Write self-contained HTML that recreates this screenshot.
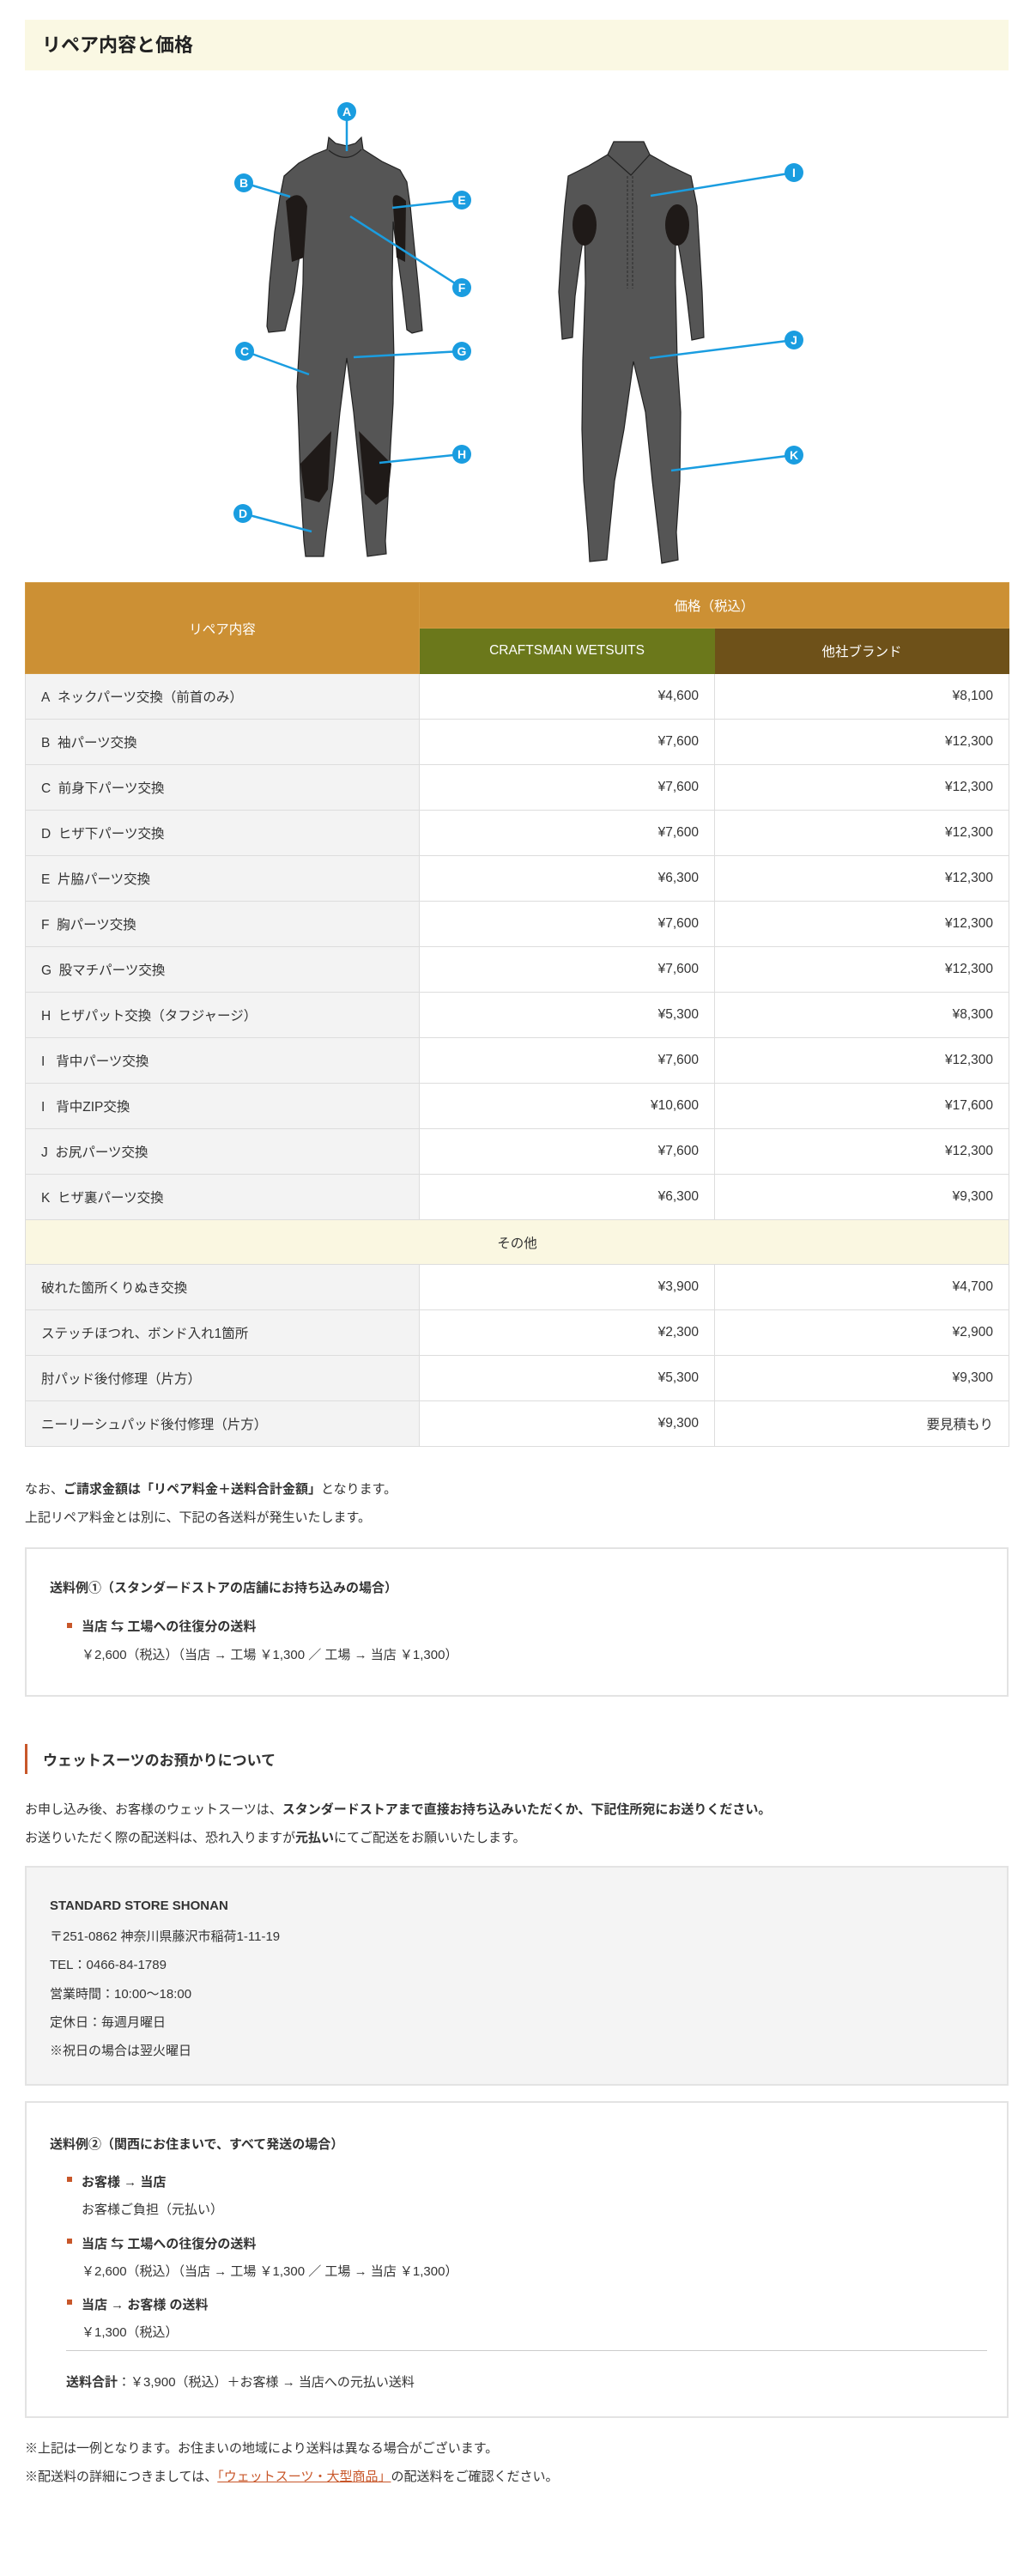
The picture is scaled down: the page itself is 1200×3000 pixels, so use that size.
<!DOCTYPE html>
<html><head><meta charset="utf-8"><style>
*{margin:0;padding:0;box-sizing:border-box}
body{width:1200px;height:3000px;background:#fff;position:relative;font-family:"Liberation Sans","Noto Sans CJK JP",sans-serif;color:#333;font-size:15px}
.abs{position:absolute}
.hd{left:29px;top:23px;width:1146px;height:59px;background:#faf8e3;font-size:22px;font-weight:bold;color:#222;padding-left:20px;line-height:59px}
table{border-collapse:collapse;position:absolute;left:29px;top:678px;width:1146px;table-layout:fixed;font-size:15.5px}
td,th{border:1px solid #ddd;height:53px;padding:0 18px;font-weight:normal}
th{color:#fff;border-color:#d29a40}
td.l{background:#f3f3f3}
td.r{text-align:right}
.p{left:29px;font-size:15px;line-height:33px}
.box{left:29px;width:1146px;border:2px solid #e3e3e3;padding:0 27px}
.ln{position:absolute;font-size:15px;white-space:nowrap}
.b{font-weight:bold}
.bl{position:absolute;width:6px;height:6px;background:#c8572a}
</style></head><body>
<div class="abs hd">リペア内容と価格</div>

<svg class="abs" style="left:0;top:0" width="1200" height="670">
<g fill="#555" stroke="#222" stroke-width="1.2">
<!-- front suit -->
<path d="M383,160 L391,167 L404,170 L414,167 L421,160 L423,174 L445,188 L466,198 L474,212 L478,240 L483,290 L488,340 L492,385 L480,388 L474,384 L469,340 L462,290 L458,258 L457,330 L459,417 L458,470 L455,520 L452,580 L449,630 L450,645 L428,648 L426,630 L420,560 L412,480 L404,417 L396,480 L388,560 L380,620 L377,648 L356,648 L354,630 L350,560 L348,500 L346,450 L350,380 L353,330 L354,258 L350,290 L343,340 L332,385 L313,387 L311,380 L314,330 L320,270 L326,230 L331,205 L348,190 L366,180 L381,174 Z"/>
<path d="M383,175 Q404,192 421,174" fill="none"/>
<path d="M333,234 Q350,218 358,240 L354,300 L340,305 Z" fill="#1f1a18" stroke="none"/>
<path d="M473,234 Q455,218 458,240 L462,300 L472,305 Z" fill="#1f1a18" stroke="none"/>
<path d="M350,540 L386,502 L382,570 L372,585 L355,580 Z" fill="#1f1a18" stroke="none"/>
<path d="M418,502 L456,540 L452,578 L438,588 L425,575 Z" fill="#1f1a18" stroke="none"/>
<!-- back suit -->
<path d="M715,165 L750,165 L757,180 L780,193 L805,205 L812,240 L815,290 L818,340 L820,393 L806,396 L800,345 L793,300 L787,265 L787,330 L789,421 L793,480 L792,560 L788,620 L790,652 L771,656 L767,620 L760,560 L752,480 L738,421 L727,500 L716,560 L710,620 L707,652 L687,654 L685,620 L680,560 L678,500 L679,420 L682,330 L681,268 L676,300 L670,345 L667,393 L655,395 L651,340 L654,290 L658,240 L662,205 L686,193 L708,180 Z"/>
<path d="M708,180 L735,204 L757,180" fill="none"/>
<path d="M731,205 L731,336 M737,205 L737,336" stroke="#333" stroke-dasharray="3,2" fill="none"/>
<ellipse cx="681" cy="262" rx="14" ry="24" fill="#1f1a18" stroke="none"/>
<ellipse cx="789" cy="262" rx="14" ry="24" fill="#1f1a18" stroke="none"/>
</g>
<g stroke="#1a9de0" stroke-width="2.5">
<line x1="404" y1="130" x2="404" y2="176"/><line x1="284" y1="213" x2="338" y2="229"/>
<line x1="538" y1="233" x2="457" y2="242"/><line x1="538" y1="335" x2="408" y2="252"/>
<line x1="285" y1="409" x2="360" y2="436"/><line x1="538" y1="409" x2="412" y2="416"/>
<line x1="538" y1="529" x2="442" y2="539"/><line x1="283" y1="598" x2="363" y2="619"/>
<line x1="925" y1="201" x2="758" y2="228"/><line x1="925" y1="396" x2="757" y2="417"/>
<line x1="925" y1="530" x2="782" y2="548"/>
</g>
<g fill="#1a9de0"><circle cx="404" cy="130" r="11"/><circle cx="284" cy="213" r="11"/><circle cx="538" cy="233" r="11"/><circle cx="538" cy="335" r="11"/><circle cx="285" cy="409" r="11"/><circle cx="538" cy="409" r="11"/><circle cx="538" cy="529" r="11"/><circle cx="283" cy="598" r="11"/><circle cx="925" cy="201" r="11"/><circle cx="925" cy="396" r="11"/><circle cx="925" cy="530" r="11"/></g>
<g fill="#fff" font-family="Liberation Sans" font-size="14" text-anchor="middle" font-weight="bold">
<text x="404" y="135">A</text><text x="284" y="218">B</text><text x="538" y="238">E</text><text x="538" y="340">F</text><text x="285" y="414">C</text><text x="538" y="414">G</text><text x="538" y="534">H</text><text x="283" y="603">D</text><text x="925" y="206">I</text><text x="925" y="401">J</text><text x="925" y="535">K</text></g>
</svg>

<table>
<colgroup><col style="width:459px"><col style="width:344px"><col style="width:343px"></colgroup>
<tr><th rowspan="2" style="background:#cc9034;text-align:center">リペア内容</th><th colspan="2" style="background:#cc9034;height:53px;text-align:center">価格（税込）</th></tr>
<tr><th style="background:#6b781b;height:52px;text-align:center;border-color:#6b781b">CRAFTSMAN WETSUITS</th><th style="background:#6e5119;text-align:center;border-color:#6e5119">他社ブランド</th></tr>
<tr><td class="l">A&nbsp; ネックパーツ交換（前首のみ）</td><td class="r">¥4,600</td><td class="r">¥8,100</td></tr>
<tr><td class="l">B&nbsp; 袖パーツ交換</td><td class="r">¥7,600</td><td class="r">¥12,300</td></tr>
<tr><td class="l">C&nbsp; 前身下パーツ交換</td><td class="r">¥7,600</td><td class="r">¥12,300</td></tr>
<tr><td class="l">D&nbsp; ヒザ下パーツ交換</td><td class="r">¥7,600</td><td class="r">¥12,300</td></tr>
<tr><td class="l">E&nbsp; 片脇パーツ交換</td><td class="r">¥6,300</td><td class="r">¥12,300</td></tr>
<tr><td class="l">F&nbsp; 胸パーツ交換</td><td class="r">¥7,600</td><td class="r">¥12,300</td></tr>
<tr><td class="l">G&nbsp; 股マチパーツ交換</td><td class="r">¥7,600</td><td class="r">¥12,300</td></tr>
<tr><td class="l">H&nbsp; ヒザパット交換（タフジャージ）</td><td class="r">¥5,300</td><td class="r">¥8,300</td></tr>
<tr><td class="l">I&nbsp;&nbsp; 背中パーツ交換</td><td class="r">¥7,600</td><td class="r">¥12,300</td></tr>
<tr><td class="l">I&nbsp;&nbsp; 背中ZIP交換</td><td class="r">¥10,600</td><td class="r">¥17,600</td></tr>
<tr><td class="l">J&nbsp; お尻パーツ交換</td><td class="r">¥7,600</td><td class="r">¥12,300</td></tr>
<tr><td class="l">K&nbsp; ヒザ裏パーツ交換</td><td class="r">¥6,300</td><td class="r">¥9,300</td></tr>
<tr><td colspan="3" style="background:#faf7e1;text-align:center;height:52px">その他</td></tr>
<tr><td class="l">破れた箇所くりぬき交換</td><td class="r">¥3,900</td><td class="r">¥4,700</td></tr>
<tr><td class="l">ステッチほつれ、ボンド入れ1箇所</td><td class="r">¥2,300</td><td class="r">¥2,900</td></tr>
<tr><td class="l">肘パッド後付修理（片方）</td><td class="r">¥5,300</td><td class="r">¥9,300</td></tr>
<tr><td class="l">ニーリーシュパッド後付修理（片方）</td><td class="r">¥9,300</td><td class="r">要見積もり</td></tr>
</table>

<div class="abs p" style="top:1718px">なお、<b>ご請求金額は「リペア料金＋送料合計金額」</b>となります。<br>上記リペア料金とは別に、下記の各送料が発生いたします。</div>

<div class="abs box" style="top:1802px;height:174px">
<div class="ln b" style="left:27px;top:34px">送料例①（スタンダードストアの店舗にお持ち込みの場合）</div>
<div class="bl" style="left:47px;top:86px"></div>
<div class="ln b" style="left:64px;top:79px">当店 ⇆ 工場への往復分の送料</div>
<div class="ln" style="left:64px;top:112px">￥2,600（税込）（当店 → 工場 ￥1,300 ／ 工場 → 当店 ￥1,300）</div>
</div>

<div class="abs" style="left:29px;top:2031px;width:3px;height:35px;background:#c8572a"></div>
<div class="abs b" style="left:50px;top:2036px;font-size:17px">ウェットスーツのお預かりについて</div>
<div class="abs p" style="top:2091px">お申し込み後、お客様のウェットスーツは、<b>スタンダードストアまで直接お持ち込みいただくか、下記住所宛にお送りください。</b><br>お送りいただく際の配送料は、恐れ入りますが<b>元払い</b>にてご配送をお願いいたします。</div>

<div class="abs box" style="top:2173px;height:256px;background:#f4f4f4">
<div class="ln b" style="left:27px;top:36px">STANDARD STORE SHONAN</div>
<div class="ln" style="left:27px;top:69px">〒251-0862 神奈川県藤沢市稲荷1-11-19</div>
<div class="ln" style="left:27px;top:102px">TEL：0466-84-1789</div>
<div class="ln" style="left:27px;top:136px">営業時間：10:00～18:00</div>
<div class="ln" style="left:27px;top:169px">定休日：毎週月曜日</div>
<div class="ln" style="left:27px;top:202px">※祝日の場合は翌火曜日</div>
</div>

<div class="abs box" style="top:2447px;height:369px">
<div class="ln b" style="left:27px;top:37px">送料例②（関西にお住まいで、すべて発送の場合）</div>
<div class="bl" style="left:47px;top:86px"></div>
<div class="ln b" style="left:64px;top:81px">お客様 → 当店</div>
<div class="ln" style="left:64px;top:113px">お客様ご負担（元払い）</div>
<div class="bl" style="left:47px;top:158px"></div>
<div class="ln b" style="left:64px;top:153px">当店 ⇆ 工場への往復分の送料</div>
<div class="ln" style="left:64px;top:185px">￥2,600（税込）（当店 → 工場 ￥1,300 ／ 工場 → 当店 ￥1,300）</div>
<div class="bl" style="left:47px;top:229px"></div>
<div class="ln b" style="left:64px;top:224px">当店 → お客様 の送料</div>
<div class="ln" style="left:64px;top:256px">￥1,300（税込）</div>
<div class="abs" style="left:46px;top:288px;width:1073px;height:1px;background:#ccc"></div>
<div class="ln" style="left:46px;top:314px"><b>送料合計</b>：￥3,900（税込）＋お客様 → 当店への元払い送料</div>
</div>

<div class="abs p" style="top:2835px">※上記は一例となります。お住まいの地域により送料は異なる場合がございます。<br>※配送料の詳細につきましては、<span style="color:#c8572a;text-decoration:underline">「ウェットスーツ・大型商品」</span>の配送料をご確認ください。</div>
</body></html>
